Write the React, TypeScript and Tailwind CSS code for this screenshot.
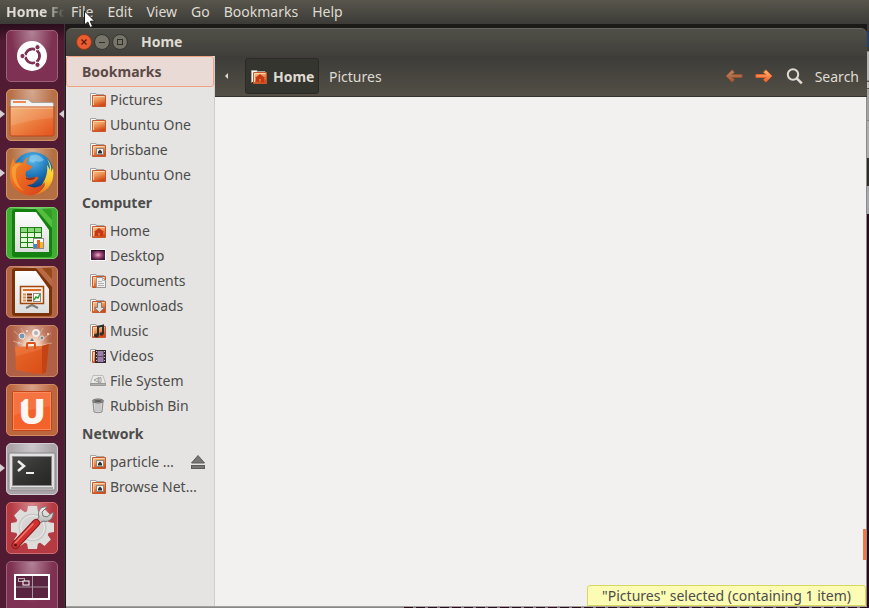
import React, { useState } from 'react';
import clsx from 'clsx';

type PlaceKind =
  | 'folder'
  | 'remote'
  | 'home'
  | 'desktop'
  | 'documents'
  | 'downloads'
  | 'music'
  | 'videos'
  | 'disk'
  | 'trash';

interface Place {
  name: string;
  kind: PlaceKind;
  ejectable?: boolean;
}

interface PlaceGroup {
  title: string;
  places: Place[];
}

interface LauncherItem {
  name: string;
  tile: string;
  icon: React.ReactNode;
  running?: boolean;
  focused?: boolean;
}

const menus = ['File', 'Edit', 'View', 'Go', 'Bookmarks', 'Help'];

const groups: PlaceGroup[] = [
  {
    title: 'Bookmarks',
    places: [
      { name: 'Pictures', kind: 'folder' },
      { name: 'Ubuntu One', kind: 'folder' },
      { name: 'brisbane', kind: 'remote' },
      { name: 'Ubuntu One', kind: 'folder' },
    ],
  },
  {
    title: 'Computer',
    places: [
      { name: 'Home', kind: 'home' },
      { name: 'Desktop', kind: 'desktop' },
      { name: 'Documents', kind: 'documents' },
      { name: 'Downloads', kind: 'downloads' },
      { name: 'Music', kind: 'music' },
      { name: 'Videos', kind: 'videos' },
      { name: 'File System', kind: 'disk' },
      { name: 'Rubbish Bin', kind: 'trash' },
    ],
  },
  {
    title: 'Network',
    places: [
      { name: 'particle …', kind: 'remote', ejectable: true },
      { name: 'Browse Net…', kind: 'remote' },
    ],
  },
];

// Shared gradients, referenced by id from the icons
const Gradients: React.FC = () => (
  <svg className="absolute h-0 w-0" aria-hidden="true">
    <defs>
      <linearGradient id="folderFront" x1="0" y1="0" x2="0.4" y2="1">
        <stop offset="0" stopColor="#f6cb98" />
        <stop offset="0.5" stopColor="#ec9355" />
        <stop offset="1" stopColor="#d24a18" />
      </linearGradient>
      <linearGradient id="bigFolder" x1="0" y1="0" x2="1" y2="1">
        <stop offset="0" stopColor="#f2ac6b" />
        <stop offset="0.5" stopColor="#ec7f40" />
        <stop offset="1" stopColor="#e4501c" />
      </linearGradient>
      <linearGradient id="arrow" x1="0" y1="0" x2="0" y2="1">
        <stop offset="0" stopColor="#fbc078" />
        <stop offset="1" stopColor="#ee5a28" />
      </linearGradient>
      <radialGradient id="globe" cx="0.5" cy="0.2" r="0.8">
        <stop offset="0" stopColor="#58b8e8" />
        <stop offset="0.5" stopColor="#1c74b8" />
        <stop offset="1" stopColor="#0b2c63" />
      </radialGradient>
      <linearGradient id="fox" x1="0" y1="0" x2="1" y2="1">
        <stop offset="0" stopColor="#f59328" />
        <stop offset="0.5" stopColor="#ea6420" />
        <stop offset="1" stopColor="#d1401a" />
      </linearGradient>
      <linearGradient id="foxTail" x1="0" y1="0" x2="0" y2="1">
        <stop offset="0" stopColor="#fdf04a" />
        <stop offset="0.6" stopColor="#fbc52c" />
        <stop offset="1" stopColor="#ec7420" />
      </linearGradient>
      <linearGradient id="paper" x1="0" y1="0" x2="0" y2="1">
        <stop offset="0" stopColor="#ffffff" />
        <stop offset="1" stopColor="#dcdcdc" />
      </linearGradient>
      <linearGradient id="bag" x1="0" y1="0" x2="1" y2="1">
        <stop offset="0" stopColor="#e86a2c" />
        <stop offset="1" stopColor="#d84a14" />
      </linearGradient>
      <radialGradient id="spark">
        <stop offset="0" stopColor="#ffffff" />
        <stop offset="0.45" stopColor="#f8d8c0" stopOpacity="0.8" />
        <stop offset="1" stopColor="#e8a080" stopOpacity="0" />
      </radialGradient>
      <linearGradient id="screen" x1="0" y1="0" x2="1" y2="1">
        <stop offset="0" stopColor="#4a4a48" />
        <stop offset="0.5" stopColor="#343432" />
        <stop offset="1" stopColor="#262624" />
      </linearGradient>
      <linearGradient id="metal" x1="0" y1="0" x2="0" y2="1">
        <stop offset="0" stopColor="#f5f5f3" />
        <stop offset="1" stopColor="#b4b4b2" />
      </linearGradient>
      <radialGradient id="wallpaper">
        <stop offset="0" stopColor="#f0b4c8" />
        <stop offset="0.5" stopColor="#a04c78" />
        <stop offset="1" stopColor="#4c1a3e" />
      </radialGradient>
    </defs>
  </svg>
);

const PlaceIcon: React.FC<{ kind: PlaceKind }> = ({ kind }) => {
  if (kind === 'desktop') {
    return (
      <svg width="16" height="16" viewBox="0 0 16 16" className="shrink-0">
        <rect x="0" y="1" width="16" height="12" fill="#fff" />
        <rect x="1" y="2" width="14" height="10" fill="url(#wallpaper)" />
        <rect x="1" y="2" width="14" height="1" fill="#2a0f22" />
      </svg>
    );
  }
  if (kind === 'disk') {
    return (
      <svg width="16" height="16" viewBox="0 0 16 16" className="shrink-0">
        <path d="M3 2.5h10l2.5 7.5v2.5H.5V10z" fill="#e9e9e7" stroke="#bcbcba" />
        <path d="M.5 10.5h15v2H.5z" fill="#b0b0ae" stroke="#989896" />
        <path d="M4 7l5-2.500v5zM8 5.500l3-1v5l-3-1z" fill="none" stroke="#a0a09e" />
      </svg>
    );
  }
  if (kind === 'trash') {
    return (
      <svg width="16" height="16" viewBox="0 0 16 16" className="shrink-0">
        <path d="M3 4h10l-1 10q-4 1.500-8 0z" fill="#d4d4d2" stroke="#8c8c8a" />
        <path d="M6 6v7M8 6v7M10 6v7" stroke="#bcbcba" />
        <ellipse cx="8" cy="3" rx="5.500" ry="2" fill="#a4a4a2" stroke="#6e6e6c" />
        <ellipse cx="8" cy="3" rx="4" ry="1" fill="#5e5e5c" />
      </svg>
    );
  }
  return (
    <svg width="16" height="16" viewBox="0 0 16 16" className="shrink-0">
      <path d="M.5 13.500V1.500h5.500v1h8V6" fill="#fafaf8" stroke="#a4a4a2" />
      <path d="M2.500 3.500h13v11h-13z" fill="url(#folderFront)" stroke="#c8582c" />
      <path d="M3.500 13V4.500h11" fill="none" stroke="#f8d4ac" />
      {kind === 'remote' && (
        <>
          <rect x="6.500" y="6.500" width="7" height="6" fill="#f2f0ec" stroke="#8c8680" />
          <path d="M10 7.500l2 2v2H8v-2z" fill="#2c2c2a" />
        </>
      )}
      {kind === 'home' && (
        <path d="M9 5l5 4h-1v4h-3v-3H8v3H5V9H4z" fill="#c43818" />
      )}
      {kind === 'documents' && (
        <>
          <path d="M6.500 4.500h6l3 3v7h-9z" fill="#f0efed" stroke="#9a9896" />
          <path d="M12.500 4.500v3h3M8 8.500h4M8 10.500h6M8 12.500h6" fill="none" stroke="#b4b2b0" />
        </>
      )}
      {kind === 'downloads' && (
        <path d="M7.500 4.500h4v5h3l-5 5-5-5h3z" fill="#dededc" stroke="#7e7e7c" />
      )}
      {kind === 'music' && (
        <>
          <path d="M8 12V4l5-1.500V11" fill="none" stroke="#2e2e2c" strokeWidth="2" />
          <ellipse cx="6.500" cy="12.500" rx="2.500" ry="2" fill="#2e2e2c" />
          <ellipse cx="11.500" cy="11" rx="2" ry="1.800" fill="#2e2e2c" />
        </>
      )}
      {kind === 'videos' && (
        <>
          <rect x="5.500" y="2.500" width="10" height="12" fill="#a07ca8" stroke="#2e2a2e" />
          <path d="M6.500 2v13M14.500 2v13" stroke="#2e2a2e" strokeWidth="2" />
          <path d="M6.500 3v12M14.500 3v12" stroke="#c8c4c8" strokeDasharray="1 2" />
          <path d="M8 8.500h5" stroke="#5e4c64" />
        </>
      )}
    </svg>
  );
};

const UbuntuIcon = () => (
  <svg width="52" height="52" viewBox="0 0 52 52">
    <circle cx="26" cy="26" r="15" fill="#fff" />
    <circle cx="26.500" cy="26" r="7" fill="none" stroke="#7e3152" strokeWidth="3" />
    <path d="M26.500 26H15M26.500 26l5.500-10M26.500 26l5.500 10" stroke="#fff" strokeWidth="1.500" />
    <circle cx="26.500" cy="26" r="5.500" fill="#fff" />
    {[
      [16.5, 26],
      [31.5, 17.2],
      [31.5, 34.8],
    ].map(([cx, cy]) => (
      <circle key={`${cx}-${cy}`} cx={cx} cy={cy} r="2.600" fill="#7e3152" stroke="#fff" strokeWidth="1" />
    ))}
  </svg>
);

const FilesIcon = () => (
  <svg width="52" height="52" viewBox="0 0 52 52">
    <path d="M4.500 46V12q0-1.500 1.500-1.500h16l4 3h20q1.500 0 1.500 1.500v31z" fill="#f4f3f1" stroke="#a8a29c" />
    <rect x="7" y="12" width="13" height="2" fill="#ec8a54" />
    <path d="M4 18h44v27q0 2-2 2H6q-2 0-2-2z" fill="url(#bigFolder)" stroke="#b8481c" />
    <path d="M5 19h42v10Q26 30 5 37z" fill="#fff" opacity="0.12" />
    <path d="M5 19h42" stroke="#f8c89c" />
  </svg>
);

const FirefoxIcon = () => (
  <svg width="52" height="52" viewBox="0 0 52 52">
    <circle cx="27" cy="24" r="20" fill="url(#globe)" />
    <path d="M24 8q8-4 14 4-3 3-8 1-4 3-7 0z" fill="#a8dcf4" opacity="0.5" />
    <path
      d="M41 11c4 5 5 9 4 13l2-4c1 8 0 14-5 20-6 6-13 8-20 6 10 0 15-4 17-10-1 1-3 2-4 2 5-7 7-14 6-21 1 1 2 3 3 5 0-4-1-8-3-11z"
      fill="url(#foxTail)"
    />
    <path
      d="M8 10c0 3 0 4 1 5 3-1 5-1 8 0 1-3 3-5 6-6-2 3-3 5-2 7 2 2 5 1 5 3-1 3-5 3-6 5 0 2-1 3 0 4 2 3 6 2 9 1 3-1 4 1 3 2-3 3-5 6-11 6 6 4 13 3 18-3-1 9-10 15-19 13C10 45 3 36 4 25c0-5 1-11 4-15z"
      fill="url(#fox)"
    />
    <path d="M6 20c-1 10 3 20 12 23-6-5-9-12-8-20 0-4 3-6 6-7-4-1-8 0-10 4z" fill="#fbb040" opacity="0.6" />
    <path d="M20 29c2 2 6 1 10 0-2 3-6 4-10 2z" fill="#8c2c14" />
  </svg>
);

const CalcIcon = () => (
  <svg width="52" height="52" viewBox="0 0 52 52">
    <rect x="6" y="2" width="40" height="48" rx="3" fill="#14800f" />
    <path d="M30 2h13q3 0 3 3v16z" fill="#54bf3f" />
    <path d="M36 2h7q3 0 3 3v8z" fill="#2f9e22" />
    <path d="M9 5h21l13 18v22H9z" fill="url(#paper)" />
    <rect x="14" y="20" width="22" height="21" fill="#1d7f14" />
    {[21, 26, 31, 36].map(y =>
      [15, 22, 29].map(x => (
        <rect key={`${x}-${y}`} x={x} y={y} width="6" height="4" fill={y === 21 ? '#8ad67a' : '#e4f8dc'} />
      ))
    )}
    <rect x="27.500" y="31.500" width="10" height="10" fill="#fff" stroke="#8a8a8a" />
    <path d="M28 37h3v4h-3z" fill="#2f8ae0" />
    <path d="M31 33h3v8h-3z" fill="#e8641c" />
    <path d="M34 35h3v6h-3z" fill="#f4b82c" />
  </svg>
);

const ImpressIcon = () => (
  <svg width="52" height="52" viewBox="0 0 52 52">
    <rect x="6" y="2" width="40" height="48" rx="3" fill="#7c3208" />
    <path d="M30 2h13q3 0 3 3v16z" fill="#b86a44" />
    <path d="M36 2h7q3 0 3 3v8z" fill="#954818" />
    <path d="M9 5h21l13 18v24H9z" fill="url(#paper)" />
    <path d="M26 37v3M26 39l-6 3M26 39l6 3" fill="none" stroke="#7c7c7c" strokeWidth="2" />
    <rect x="14.500" y="20.500" width="23" height="17" fill="#fbeee4" stroke="#a2460c" strokeWidth="1.500" />
    <rect x="17" y="23" width="18" height="2" fill="#d8702c" />
    <path d="M17 28.500h3M17 31.500h3M17 34.500h3" stroke="#e08a4c" strokeWidth="2" />
    <path d="M21 28.500h5M21 31.500h5M21 34.500h5" stroke="#7c3208" strokeWidth="2" />
    <rect x="27.500" y="27.500" width="7" height="8" fill="#fff" stroke="#8a8a8a" />
    <path d="M28 34l2-3 2 1 2-4" fill="none" stroke="#2ca02c" strokeWidth="1.500" />
  </svg>
);

const SoftwareIcon = () => (
  <svg width="52" height="52" viewBox="0 0 52 52">
    <circle cx="26" cy="20" r="18" fill="url(#spark)" />
    <path d="M26 22L8 6M26 22L15 3M26 22L37 3M26 22L45 8M26 22L7 16M26 22L46 18" stroke="#f4d4c4" opacity="0.5" />
    <circle cx="16" cy="11" r="3" fill="#7898b4" stroke="#e8e4e0" />
    <circle cx="30" cy="8" r="3" fill="#b4b0ac" stroke="#f0ecec" strokeWidth="2" />
    <circle cx="36" cy="13" r="2" fill="#888" stroke="#e0dcd8" />
    <circle cx="21" cy="6" r="1" fill="#eee" />
    <circle cx="42" cy="9" r="1" fill="#f8e8d0" />
    <circle cx="13" cy="18" r="1.500" fill="#d8c4b4" />
    <path d="M24 16l2-3 2 3z" fill="#547890" />
    <path d="M9 22l27-1 7-2-3 29-9 1-21-4z" fill="url(#bag)" />
    <path d="M36 21l7-2-3 28-4 2z" fill="#c24414" />
    <path d="M10 31q13-3 26-7v-3l-27 1z" fill="#f08850" opacity="0.4" />
    <path d="M21 24v-5q0-1 1-1h6q1 0 1 1v5" fill="none" stroke="#d8541c" strokeWidth="2" />
  </svg>
);

const UbuntuOneIcon = () => (
  <svg width="52" height="52" viewBox="0 0 52 52">
    <rect x="6.500" y="7.500" width="39" height="39" rx="1" fill="#f4622c" stroke="#c84414" />
    <path d="M7 8h38v14Q26 24 7 32z" fill="#fff" opacity="0.1" />
    <rect x="7.500" y="8.500" width="37" height="37" fill="none" stroke="#f88c5c" />
    <text
      x="26"
      y="40"
      textAnchor="middle"
      fontFamily="Open Sans, Noto Sans, sans-serif"
      fontWeight="800"
      fontSize="36"
      fill="#fdf6f2"
    >
      U
    </text>
    <path d="M13 13h8l-5 5h-3z" fill="#f4743f" />
  </svg>
);

const TerminalIcon = () => (
  <svg width="52" height="52" viewBox="0 0 52 52">
    <rect x="3" y="10" width="46" height="37" rx="1" fill="#e2e1e2" stroke="#868286" />
    <rect x="6" y="13" width="40" height="30" fill="#888688" />
    <rect x="7" y="14" width="38" height="28" fill="url(#screen)" />
    <path d="M5 45h42" stroke="#a8a6a8" strokeWidth="2" />
    <path d="M12 18l6 5-6 5" fill="none" stroke="#f0f0ee" strokeWidth="2.500" />
    <path d="M20 30h8" stroke="#f0f0ee" strokeWidth="2" />
  </svg>
);

const SettingsIcon = () => (
  <svg width="52" height="52" viewBox="0 0 52 52">
    <g fill="#dedddb">
      {[0, 45, 90, 135].map(angle => (
        <path key={angle} d="M22 4h9l1 6H21zM21 41h11l-1 6h-9z" transform={`rotate(${angle} 26.500 25.500)`} />
      ))}
      <circle cx="26.500" cy="25.500" r="17" />
    </g>
    <circle cx="26.500" cy="25.500" r="14" fill="#c9c8c6" />
    <circle cx="26.500" cy="25.500" r="12" fill="#d6d5d3" stroke="#efeeec" />
    <path d="M28 25l8-9" stroke="#8e8c8a" strokeWidth="5" />
    <path d="M28 25l8-9" stroke="#e8e6e4" strokeWidth="3" />
    <path
      d="M41 5c-6-1-10 4-8 10l-2 3 3 3 3-2c6 2 11-3 10-9l-6 5-4-1-1-4z"
      fill="url(#metal)"
      stroke="#777573"
    />
    <path d="M9.500 43L30 21" stroke="#8c1c1c" strokeWidth="8" strokeLinecap="round" />
    <path d="M9.500 43L30 21" stroke="#d03030" strokeWidth="6" strokeLinecap="round" />
    <path d="M9 41l18-19" stroke="#ee7c74" strokeWidth="1.500" strokeLinecap="round" />
    <circle cx="9.500" cy="43" r="1.500" fill="#5e1010" />
  </svg>
);

const WorkspacesIcon = () => (
  <svg width="52" height="52" viewBox="0 0 52 52">
    <rect x="9" y="14" width="34" height="24" fill="#5a2440" />
    <path d="M26.500 14v24M9 26h34" stroke="#a6949e" />
    <rect x="9" y="14" width="34" height="24" fill="none" stroke="#fff" strokeWidth="2" />
    <rect x="12.500" y="17.500" width="6" height="3" fill="none" stroke="#b8a8b0" />
    <rect x="17" y="20" width="6" height="4" fill="#5a2440" stroke="#fff" />
  </svg>
);

const launcherItems: LauncherItem[] = [
  { name: 'Dash Home', tile: 'bg-[#7e3152] border-[#9c6079]', icon: <UbuntuIcon /> },
  { name: 'Files', tile: 'bg-[#b87048] border-[#d09468]', icon: <FilesIcon />, running: true, focused: true },
  { name: 'Firefox', tile: 'bg-[#b47042] border-[#d09468]', icon: <FirefoxIcon />, running: true },
  { name: 'LibreOffice Calc', tile: 'bg-[#40ac34] border-[#74d060]', icon: <CalcIcon /> },
  { name: 'LibreOffice Impress', tile: 'bg-[#b06444] border-[#cc8864]', icon: <ImpressIcon /> },
  { name: 'Ubuntu Software Centre', tile: 'bg-[#b06044] border-[#cc8864]', icon: <SoftwareIcon /> },
  { name: 'Ubuntu One', tile: 'bg-[#bc6640] border-[#d48a60]', icon: <UbuntuOneIcon /> },
  { name: 'Terminal', tile: 'bg-[#aaa4a8] border-[#d0cccf]', icon: <TerminalIcon />, running: true },
  { name: 'System Settings', tile: 'bg-[#b63a42] border-[#d06c70]', icon: <SettingsIcon /> },
  { name: 'Workspace Switcher', tile: 'bg-[#7e3152] border-[#9c6079]', icon: <WorkspacesIcon /> },
];

const MenuBar: React.FC = () => (
  <header className="flex h-6 shrink-0 items-center bg-linear-to-b from-[#58564c] to-[#3c3b37] pl-[6px] text-[#dfdbd2]">
    <div className="w-[65px] whitespace-nowrap mask-r-from-60% mask-r-to-90% font-bold">Home Fo</div>
    <nav className="flex items-center gap-[14px]">
      {menus.map(menu => (
        <button key={menu} type="button">
          {menu}
        </button>
      ))}
    </nav>
  </header>
);

const Launcher: React.FC = () => (
  <aside className="flex w-[65px] shrink-0 flex-col gap-[7px] overflow-hidden border-r border-[#43303c] bg-linear-to-b from-[#2a0d1c] to-[#501b33] to-3% pt-[6px]">
    {launcherItems.map(item => (
      <div key={item.name} className="relative flex h-[52px] shrink-0 pl-[6px]">
        <button
          type="button"
          aria-label={item.name}
          className={clsx(
            'flex h-[52px] w-[52px] items-center justify-center rounded-[5px] border bg-[radial-gradient(ellipse_at_50%_0%,rgba(255,255,255,0.4),rgba(255,255,255,0)_60%)]',
            item.tile
          )}
        >
          <span className="shrink-0">{item.icon}</span>
        </button>
        {item.running && (
          <svg className="absolute top-[21px] left-0" width="5" height="8" viewBox="0 0 5 8">
            <path d="M0 0l5 4-5 4z" fill="#d6d0d3" />
          </svg>
        )}
        {item.focused && (
          <svg className="absolute top-[21px] right-0" width="5" height="8" viewBox="0 0 5 8">
            <path d="M5 0L0 4l5 4z" fill="#d6d0d3" />
          </svg>
        )}
      </div>
    ))}
  </aside>
);

const TitleBar: React.FC = () => (
  <div className="flex h-7 shrink-0 items-center rounded-t-md border-t border-[#68665c] bg-linear-to-b from-[#504f47] to-[#403f3a] pb-[2px] pl-[10px] text-[#dfdbd2]">
    <div className="flex gap-[2px]">
      <button type="button" aria-label="Close">
        <svg width="16" height="16" viewBox="0 0 16 16">
          <circle cx="8" cy="8" r="7.500" fill="#ea5d30" stroke="#93371c" />
          <path d="M5.500 5.500l5 5M10.500 5.500l-5 5" stroke="#5c1e0c" strokeWidth="1.300" />
        </svg>
      </button>
      <button type="button" aria-label="Minimise">
        <svg width="16" height="16" viewBox="0 0 16 16">
          <circle cx="8" cy="8" r="7.500" fill="#777469" stroke="#35342f" />
          <path d="M5 8.500h6" stroke="#2f2e2a" />
        </svg>
      </button>
      <button type="button" aria-label="Maximise">
        <svg width="16" height="16" viewBox="0 0 16 16">
          <circle cx="8" cy="8" r="7.500" fill="#777469" stroke="#35342f" />
          <rect x="5.500" y="5.500" width="5" height="5" fill="none" stroke="#2f2e2a" />
        </svg>
      </button>
    </div>
    <h1 className="pl-[13px] font-bold">Home</h1>
  </div>
);

const Sidebar: React.FC<{ selected: string }> = ({ selected }) => (
  <aside className="w-[149px] shrink-0 border-r border-[#d0cecb] bg-[#e6e4e2]">
    {groups.map(group => (
      <section key={group.title}>
        <h2
          className={clsx(
            'flex h-[31px] items-center border pl-[15px] font-bold',
            group.title === selected
              ? 'rounded-[3px] border-[#f0a283] bg-[#e9dad5] text-[#5c4a48]'
              : 'border-transparent'
          )}
        >
          {group.title}
        </h2>
        <ul>
          {group.places.map((place, idx) => (
            <li key={idx} className="flex h-[25px] items-center pr-2 pl-6">
              <button type="button" className="flex items-center gap-1 whitespace-nowrap">
                <PlaceIcon kind={place.kind} />
                {place.name}
              </button>
              {place.ejectable && (
                <button type="button" aria-label={`Eject ${place.name}`} className="ml-auto">
                  <svg width="16" height="16" viewBox="0 0 16 16">
                    <path d="M8 1.500L14.500 9h-13z" fill="#777673" stroke="#5c5b58" />
                    <rect x="1.500" y="11.500" width="13" height="3" fill="#777673" stroke="#5c5b58" />
                  </svg>
                </button>
              )}
            </li>
          ))}
        </ul>
      </section>
    ))}
  </aside>
);

// Points left; the forward button mirrors it
const arrowPath = 'M1 8l6.500-6.500 2.500 2.500-2.500 2.500H18v3H7.500L10 12l-2.500 2.500z';

const Toolbar: React.FC = () => (
  <div className="flex h-[41px] shrink-0 items-center border-b border-[#35342f] bg-linear-to-b from-[#3d3c38] to-[#534f46] pr-2 pl-[10px] text-[#dfdbd2]">
    <button type="button" aria-label="Scroll path" className="w-5">
      <svg width="4" height="6" viewBox="0 0 4 6">
        <path d="M3 0v6L0 3z" fill="#dfdbd2" />
      </svg>
    </button>
    <button
      type="button"
      className="flex h-9 w-[74px] items-center gap-[6px] rounded-[3px] border border-[#2b2a27] bg-[#353530] pt-px pl-[5px] font-bold"
    >
      <PlaceIcon kind="home" />
      Home
    </button>
    <button type="button" className="pt-px pl-[10px]">
      Pictures
    </button>
    <div className="ml-auto flex items-center">
      <button type="button" aria-label="Back" disabled className="opacity-60">
        <svg width="18" height="16" viewBox="0 0 19 16">
          <path d={arrowPath} fill="url(#arrow)" stroke="#c8582c" strokeLinejoin="round" />
        </svg>
      </button>
      <button type="button" aria-label="Forward" className="ml-3">
        <svg width="18" height="16" viewBox="0 0 19 16">
          <path
            d={arrowPath}
            transform="translate(19 0) scale(-1 1)"
            fill="url(#arrow)"
            stroke="#e4602c"
            strokeLinejoin="round"
          />
        </svg>
      </button>
      <button type="button" className="ml-[13px] flex items-center gap-3 pt-px">
        <svg width="17" height="17" viewBox="0 0 17 17" fill="none" stroke="#dfdbd2">
          <circle cx="7" cy="6.500" r="5.200" strokeWidth="2" />
          <path d="M10.800 10.300l5 5" strokeWidth="2.600" />
        </svg>
        Search
      </button>
    </div>
  </div>
);

// Slivers of the windows that are open behind this one
const BackgroundEdge: React.FC = () => (
  <div className="flex w-[2px] shrink-0 flex-col bg-[#2c0a1e]">
    <div className="h-[7px] bg-[#3c3b37]" />
    <div className="h-4 bg-[#24406c]" />
    <div className="h-1 bg-[#3c3b37]" />
    <div className="h-[30px] border-y border-[#8a8886] bg-[#b4b2b0]" />
    <div className="h-2 border-y border-[#55534f] bg-[#c0bebc]" />
    <div className="h-8 border-b border-[#8a8886] bg-[#a4a2a0]" />
    <div className="h-[37px] bg-[#b0aeac]" />
    <div className="h-7 bg-[#2e2d2a]" />
    <div className="h-7 bg-[#a8aab0]" />
  </div>
);

export default function App() {
  const [selected] = useState('Bookmarks');

  return (
    <div className="flex h-screen flex-col overflow-hidden bg-[#1c1a18] font-['Noto_Sans','Open_Sans',sans-serif] text-sm text-[#4c4c4c]">
      <Gradients />
      <MenuBar />
      <div className="flex min-h-0 flex-1">
        <Launcher />
        <main className="flex min-w-0 flex-1 flex-col pt-1 pl-px">
          <TitleBar />
          <div className="flex min-h-0 flex-1">
            <Sidebar selected={selected} />
            <div className="flex min-w-0 flex-1 flex-col bg-[#f2f1f0]">
              <Toolbar />
              <div className="relative flex-1 border-r border-[#8e8c88]">
                <div className="absolute right-0 bottom-[46px] h-[31px] w-[3px] bg-[#f07746]" />
                <div
                  role="status"
                  className="absolute right-0 bottom-0 flex h-[21px] items-center rounded-t-[3px] border border-[#d8d860] bg-[#fdfcb4] px-[14px] whitespace-nowrap"
                >
                  "Pictures" selected (containing 1 item)
                </div>
              </div>
            </div>
          </div>
          <div className="flex h-[2px] shrink-0 border-t border-[#a3a19c]">
            <div className="w-[338px] bg-[#8a8886]" />
            <div className="flex-1 bg-[repeating-linear-gradient(90deg,#2c0a1e_0px,#2c0a1e_9px,#8a8088_9px,#8a8088_12px)]" />
          </div>
        </main>
        <BackgroundEdge />
      </div>
      {/* Mouse pointer */}
      <svg className="pointer-events-none absolute top-[10px] left-[83px]" width="13" height="19" viewBox="0 0 13 19">
        <path
          d="M1.500 1v14l3.300-3 2.200 5.500 2.600-1.100-2.300-5.200h4.500z"
          fill="#fff"
          stroke="#1a1a1a"
          strokeLinejoin="round"
        />
      </svg>
    </div>
  );
}
